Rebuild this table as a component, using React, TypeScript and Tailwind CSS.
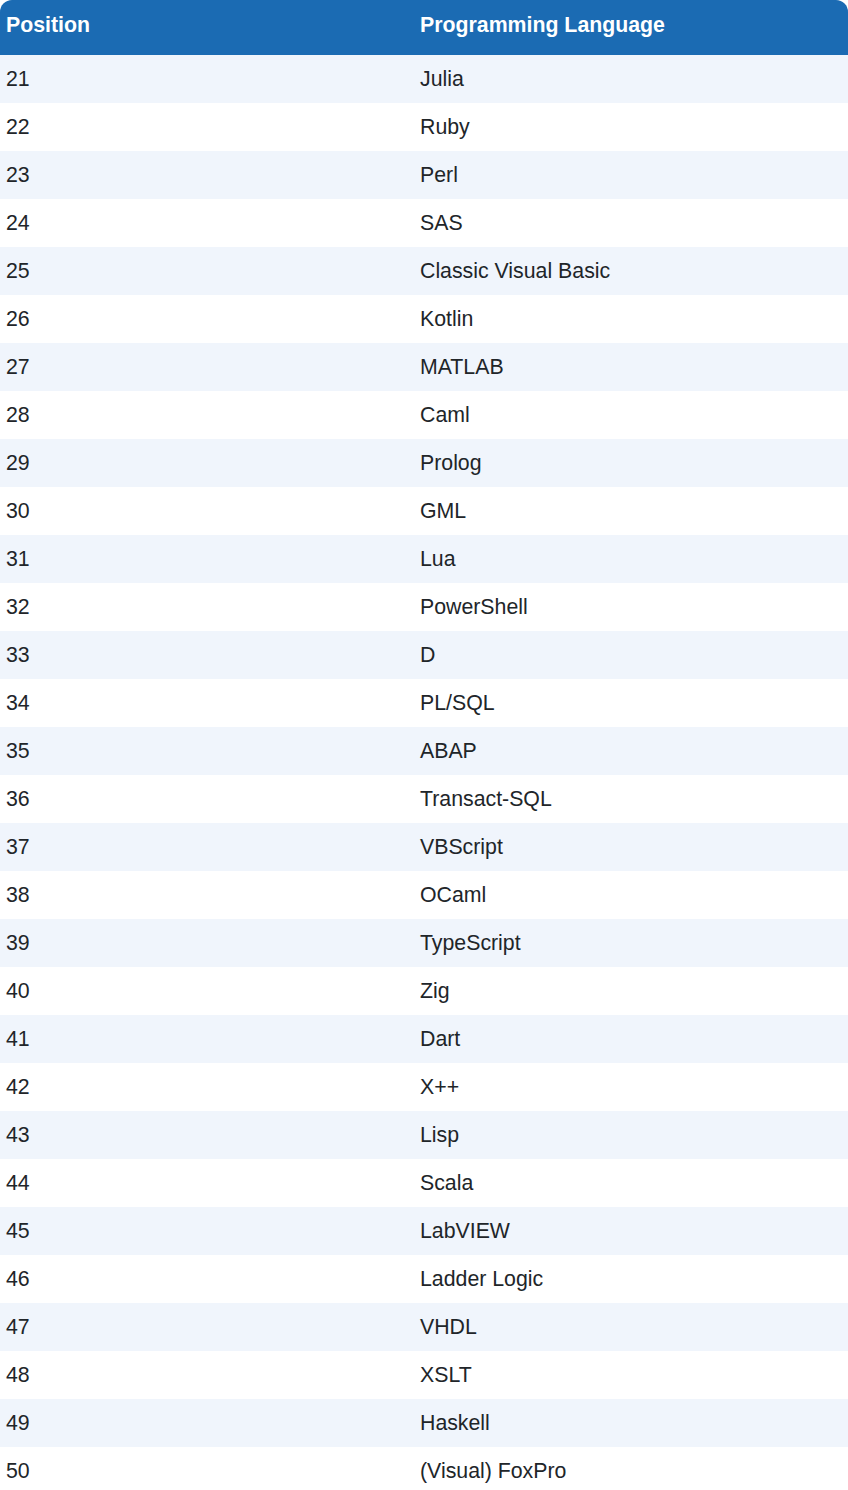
import React from "react";

const languages = [
  "Julia", "Ruby", "Perl", "SAS", "Classic Visual Basic", "Kotlin", "MATLAB", "Caml", "Prolog", "GML",
  "Lua", "PowerShell", "D", "PL/SQL", "ABAP", "Transact-SQL", "VBScript", "OCaml", "TypeScript", "Zig",
  "Dart", "X++", "Lisp", "Scala", "LabVIEW", "Ladder Logic", "VHDL", "XSLT", "Haskell", "(Visual) FoxPro",
];

export default function App() {
  return (
    <div className="w-[848px] bg-white" style={{ fontFamily: '"Liberation Sans", Arial, sans-serif' }}>
      <div className="grid grid-cols-[414px_1fr] h-[55px] items-center rounded-t-[12px] bg-[#1b6bb3] pb-[3px] text-[21.3px] font-bold text-white">
        <div className="pl-[6px]">Position</div>
        <div className="pl-[6px]">Programming Language</div>
      </div>
      {languages.map((lang, i) => (
        <div
          key={lang}
          className={
            "grid grid-cols-[414px_1fr] h-[48px] items-center pt-[2px] text-[21.3px] text-[#212529] " +
            (i % 2 === 0 ? "bg-[#f0f5fc]" : "bg-white")
          }
        >
          <div className="pl-[6px]">{21 + i}</div>
          <div className="pl-[6px]">{lang}</div>
        </div>
      ))}
    </div>
  );
}
